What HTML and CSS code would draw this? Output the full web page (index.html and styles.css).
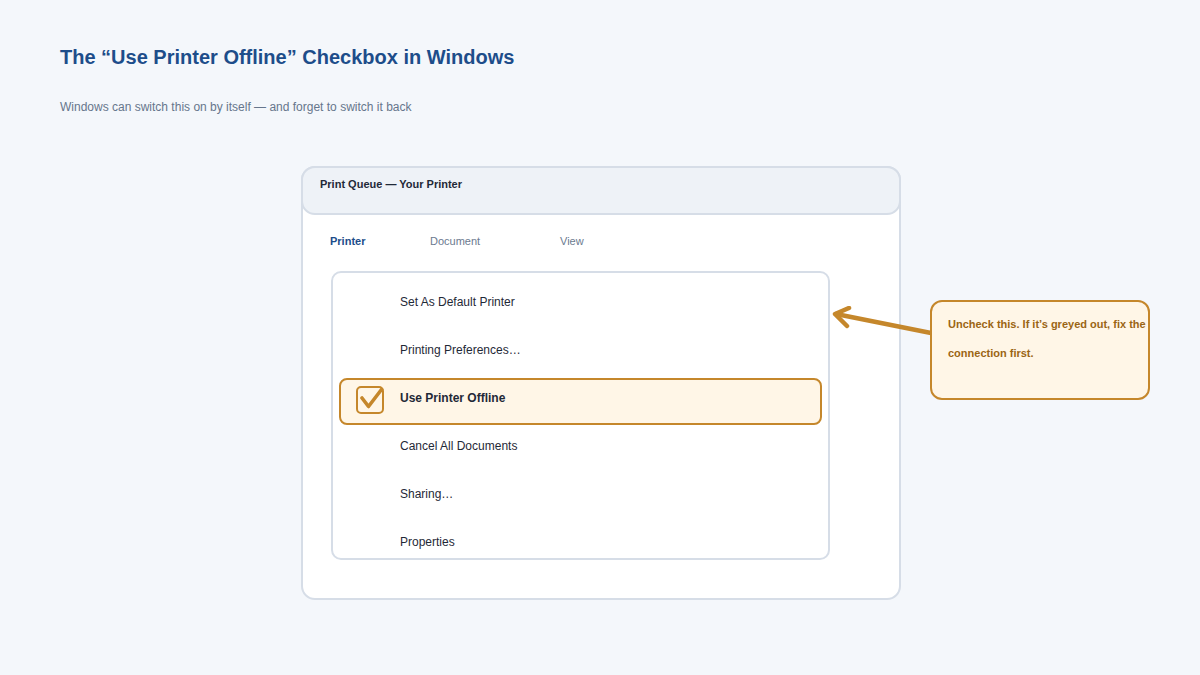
FILE: index.html
```html
<!DOCTYPE html>
<html>
<head>
<meta charset="utf-8">
<link rel="stylesheet" href="styles.css">
</head>
<body>
<div class="page">
  <h1 class="title">The “Use Printer Offline” Checkbox in Windows</h1>
  <p class="subtitle">Windows can switch this on by itself — and forget to switch it back</p>
  <div class="stage">
    <div class="window">
      <div class="titlebar">Print Queue — Your Printer</div>
      <div class="tabs">
        <span class="tab tab-active">Printer</span>
        <span class="tab tab-doc">Document</span>
        <span class="tab">View</span>
      </div>
      <div class="menu">
        <div class="item">Set As Default Printer</div>
        <div class="item">Printing Preferences…</div>
        <div class="item item-hl">
          <span class="hl-box"></span>
          <span class="check">
            <svg width="28" height="28" viewBox="0 0 28 28"><rect x="1" y="1" width="26" height="26" rx="4" fill="none" stroke="#c5872b" stroke-width="2"/><path d="M6 12 L12.5 20.5 L25.5 3.5" fill="none" stroke="#c5872b" stroke-width="3.6" stroke-linecap="round" stroke-linejoin="round"/></svg>
          </span>
          <span class="item-text">Use Printer Offline</span>
        </div>
        <div class="item">Cancel All Documents</div>
        <div class="item">Sharing…</div>
        <div class="item">Properties</div>
      </div>
    </div>
    <svg class="arrow" width="110" height="40" viewBox="0 0 110 40"><path d="M105 27 L10 8" stroke="#c5872b" stroke-width="4.5" stroke-linecap="round" fill="none"/><path d="M23 2 L9 8 L21 20" stroke="#c5872b" stroke-width="4.5" stroke-linecap="round" stroke-linejoin="round" fill="none"/></svg>
    <div class="callout">Uncheck this. If it’s greyed out, fix the connection first.</div>
  </div>
</div>
</body>
</html>
```

FILE: styles.css
```css
html, body {
  margin: 0;
  padding: 0;
}
body {
  background: #f4f7fb;
  font-family: "Liberation Sans", Arial, sans-serif;
  width: 1200px;
  height: 675px;
  overflow: hidden;
}
.page {
  padding: 45px 60px 0 60px;
}
.title {
  margin: 0;
  font-size: 20px;
  line-height: 24px;
  font-weight: 700;
  color: #1d4d8a;
}
.subtitle {
  margin: 30px 0 0 0;
  font-size: 12px;
  line-height: 16px;
  color: #66768c;
}
.stage {
  position: relative;
  margin-top: 51px;
  width: 1080px;
}
.window {
  width: 600px;
  height: 434px;
  box-sizing: border-box;
  margin-left: 241px;
  border: 2px solid #d6dde7;
  border-radius: 14px;
  background: #ffffff;
}
.titlebar {
  margin: -2px -2px 0 -2px;
  height: 49px;
  box-sizing: border-box;
  border: 2px solid #d6dde7;
  border-radius: 14px;
  background: #eef2f7;
  padding: 9px 0 0 17px;
  font-size: 11px;
  line-height: 14px;
  font-weight: 700;
  color: #1f2937;
}
.tabs {
  display: flex;
  padding: 19px 0 0 27px;
  height: 38px;
  box-sizing: border-box;
  font-size: 11px;
  line-height: 14px;
  color: #6b7a8f;
}
.tab {
  width: 100px;
}
.tab-doc {
  width: 130px;
}
.tab-active {
  color: #1d4d8a;
  font-weight: 700;
}
.menu {
  margin: 18px 0 0 28px;
  width: 499px;
  height: 289px;
  box-sizing: border-box;
  border: 2px solid #d6dde7;
  border-radius: 10px;
  padding-top: 5px;
  overflow: hidden;
}
.item {
  position: relative;
  height: 48px;
  display: flex;
  align-items: center;
  padding-left: 67px;
  font-size: 12px;
  color: #1f2937;
}
.item-hl {
  font-weight: 700;
}
.hl-box {
  position: absolute;
  left: 6px;
  right: 6px;
  top: 4px;
  height: 47px;
  box-sizing: border-box;
  border: 2px solid #c5872b;
  border-radius: 8px;
  background: #fff6e7;
}
.check {
  position: absolute;
  left: 23px;
  top: 12px;
  width: 28px;
  height: 28px;
}
.check svg {
  display: block;
}
.item-text {
  position: relative;
}
.arrow {
  position: absolute;
  left: 766px;
  top: 140px;
}
.callout {
  position: absolute;
  left: 870px;
  top: 134px;
  width: 220px;
  height: 100px;
  box-sizing: border-box;
  border: 2px solid #c5872b;
  border-radius: 12px;
  background: #fff6e7;
  padding: 8px 0 0 16px;
  font-size: 11px;
  line-height: 29px;
  font-weight: 700;
  color: #9b6514;
}
```
